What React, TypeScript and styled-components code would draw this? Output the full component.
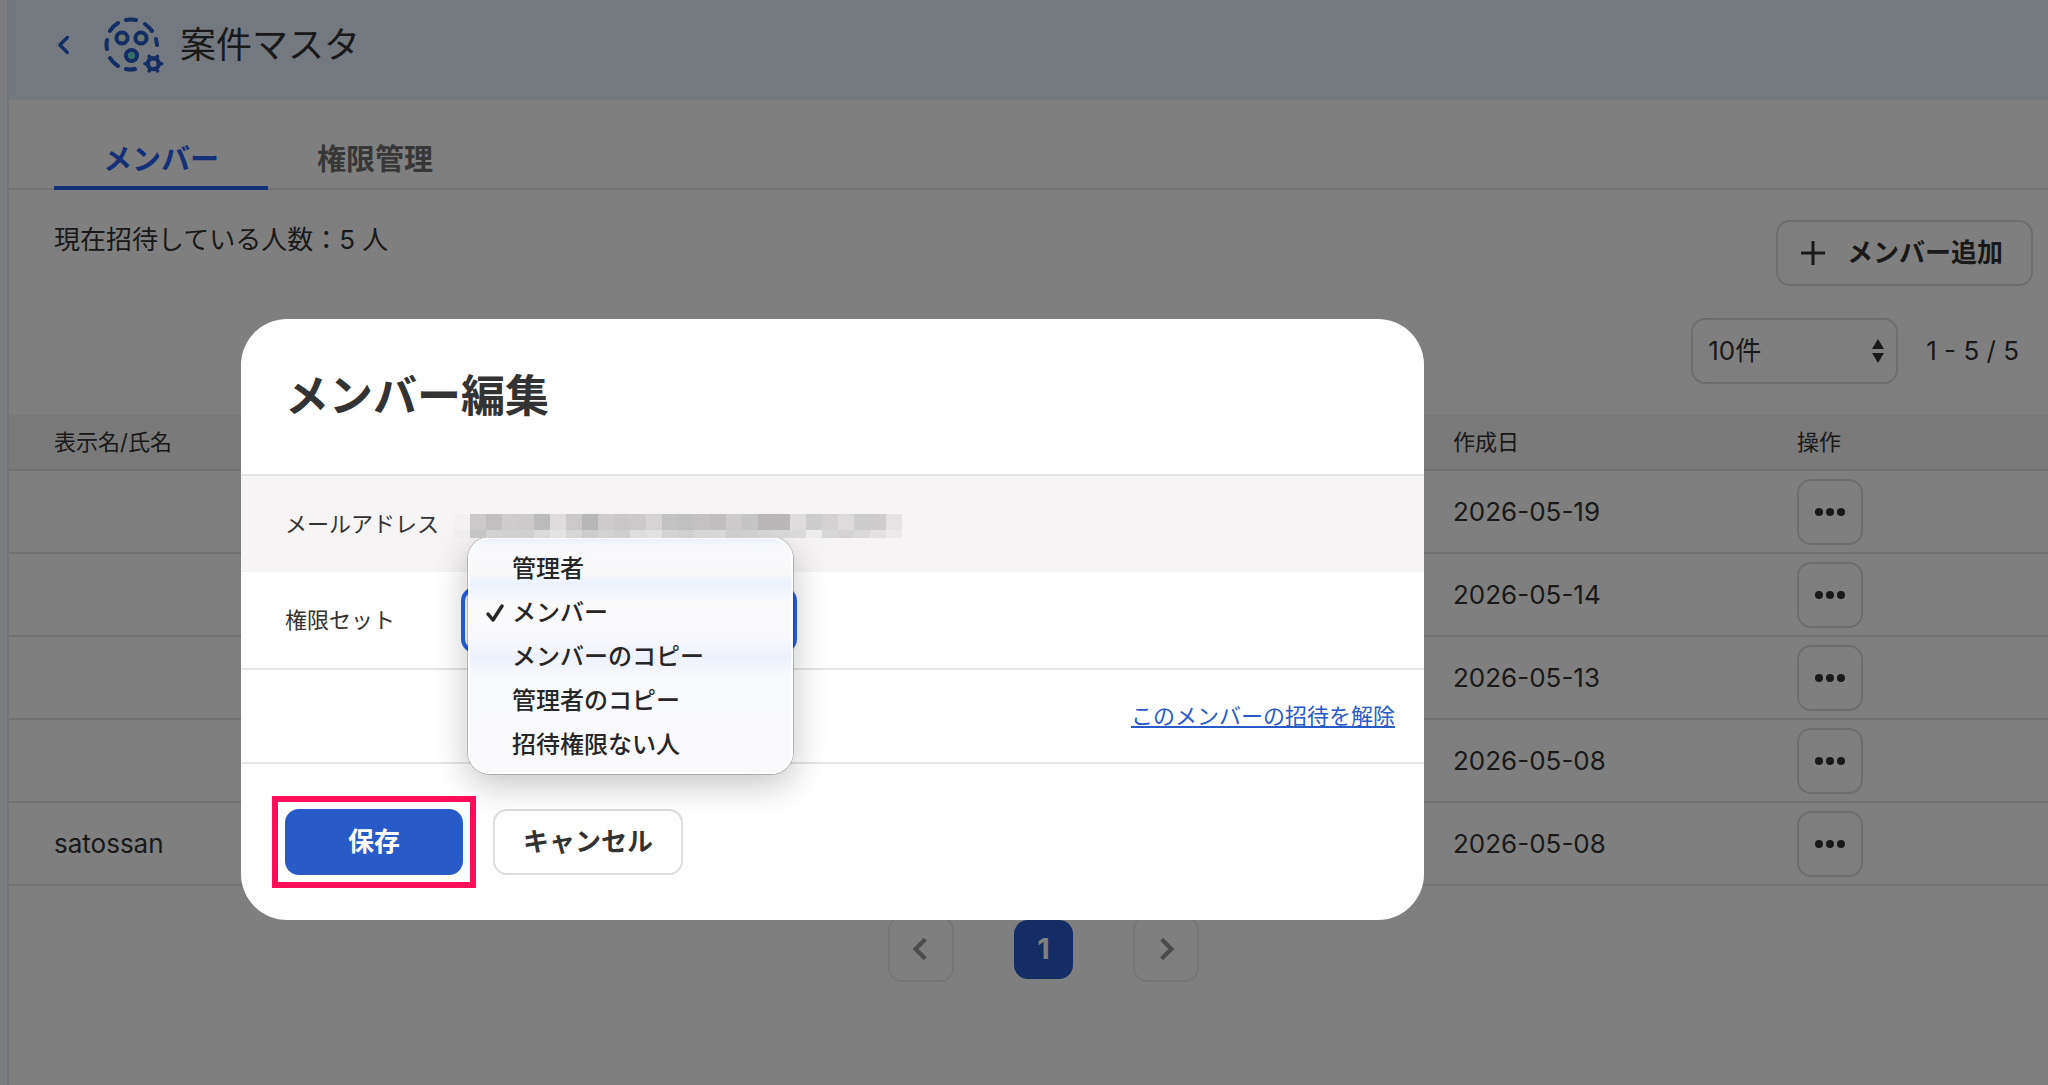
import React from "react";
import styled, { createGlobalStyle, css } from "styled-components";

const GlobalStyle = createGlobalStyle`
  *, *::before, *::after { box-sizing: border-box; }
  body {
    margin: 0;
    background: #fff;
    color: #333;
    font-family: Inter, "Noto Sans CJK JP", sans-serif;
    font-size: 26px;
    line-height: 40px;
  }
  button, select, input { font: inherit; color: inherit; margin: 0; }
`;

const Shell = styled.div`
  position: relative;
  display: flex;
  min-height: 100vh;
  overflow: hidden;
`;

const SideRail = styled.div`
  flex: none;
  width: 9px;
  background: #f6f8ff;
  border-right: 2px solid #e2edfb;
`;

const Page = styled.main`
  flex: 1;
  min-width: 0;
`;

const Header = styled.header`
  display: flex;
  align-items: center;
  height: 100px;
  padding: 0 45px 10px;
  background: #e9f1ff;
`;

const BackLink = styled.a`
  display: flex;
  width: 20px;
  margin-right: 30px;
  color: #285ac8;
`;

const PageTitle = styled.h1`
  margin: 0 0 0 16px;
  font-size: 36px;
  font-weight: 400;
  line-height: 52px;
`;

const Tabs = styled.nav`
  display: flex;
  align-items: flex-end;
  height: 90px;
  padding: 0 45px;
  border-bottom: 2px solid #e5e5e5;
`;

const Tab = styled.a<{ $active?: boolean }>`
  height: 60px;
  margin-bottom: -2px;
  padding: 0 49px;
  border-bottom: 4px solid transparent;
  color: #6e6e6e;
  font-size: 29px;
  font-weight: 700;
  line-height: 60px;
  text-decoration: none;
  ${(p) => p.$active && css`
    color: #2b60f0;
    border-color: #2b60f0;
  `}
`;

const Toolbar = styled.div`
  display: flex;
  justify-content: space-between;
  padding: 30px 15px 0 45px;
`;

const InviteCount = styled.p`
  margin: 0;
`;

const Button = styled.button<{ $primary?: boolean }>`
  display: inline-flex;
  align-items: center;
  justify-content: center;
  gap: 22px;
  height: 66px;
  padding: 0 28px;
  border: 2px solid #ddd;
  border-radius: 14px;
  background: #fff;
  font-weight: 700;
  ${(p) => p.$primary && css`
    width: 178px;
    border-color: #285ac8;
    background: #285ac8;
    color: #fff;
  `}
`;

const AddButton = styled(Button)`
  padding-left: 23px;
`;

const SquareButton = styled(Button)`
  width: 66px;
  padding: 0;
  vertical-align: top;
  &:disabled { border-color: #ececec; color: #999; }
`;

const Paging = styled.div`
  display: flex;
  align-items: center;
  justify-content: flex-end;
  gap: 28px;
  padding: 32px 29px 30px 45px;
`;

const SelectBox = styled.div`
  display: flex;
  align-items: center;
  width: 207px;
  height: 66px;
  padding-right: 12px;
  border: 2px solid #ddd;
  border-radius: 14px;
`;

const PageSize = styled.select`
  flex: 1;
  height: 60px;
  padding: 0 15px;
  border: 0;
  background: transparent;
  appearance: none;
`;

const Table = styled.table`
  width: 100%;
  border-collapse: collapse;
  table-layout: fixed;
`;

const HeadCell = styled.th<{ $width?: number }>`
  width: ${(p) => (p.$width ? `${p.$width}px` : "auto")};
  height: 56px;
  padding: 0 0 0 45px;
  background: #f4f4f4;
  border-bottom: 2px solid #e5e5e5;
  font-size: 22px;
  font-weight: 400;
  line-height: 32px;
  text-align: left;
`;

const Cell = styled.td`
  height: 83px;
  padding: 0 0 0 45px;
  border-bottom: 2px solid #e5e5e5;
`;

const Pager = styled.nav`
  display: flex;
  align-items: center;
  justify-content: center;
  gap: 60px;
  padding: 30px 15px 30px 45px;
`;

const CurrentPage = styled.button`
  width: 59px;
  height: 59px;
  padding: 0;
  border: 0;
  border-radius: 14px;
  background: #285ac8;
  color: #fff;
  font-size: 29px;
  font-weight: 700;
`;

const Backdrop = styled.div`
  position: absolute;
  inset: 0;
  padding: 319px 241px 0;
  background: rgba(0, 0, 0, 0.5);
`;

const Dialog = styled.section`
  max-width: 1183px;
  border-radius: 46px;
  background: #fff;
`;

const DialogHead = styled.div`
  padding: 45px 44px 46px;
  border-bottom: 2px solid #e5e5e5;
`;

const DialogTitle = styled.h2`
  margin: 0;
  font-size: 44px;
  font-weight: 700;
  line-height: 64px;
`;

const FieldRow = styled.div`
  display: flex;
  align-items: center;
  height: 98px;
  padding: 0 29px 0 44px;
  border-bottom: 2px solid #e5e5e5;
  font-size: 22px;
  line-height: 32px;
`;

const MailRow = styled(FieldRow)`
  height: 96px;
  border-bottom: 0;
  background: #f6f4f5;
`;

const LinkRow = styled(FieldRow)`
  height: 94px;
`;

const FieldLabel = styled.label`
  width: 176px;
`;

const ReleaseLink = styled.a`
  margin-left: auto;
  color: #285ac8;
`;

const Mosaic = styled.div`
  position: relative;
  z-index: 2;
  display: grid;
  grid-template-columns: repeat(28, 16px);
  grid-template-rows: 16px 8px;
  margin: 4px 0 0 -7px;
`;

const Tile = styled.span<{ $tone: string }>`
  background: #${(p) => p.$tone};
`;

const RoleField = styled.div`
  position: relative;
`;

const RoleSelect = styled.select`
  display: block;
  width: 336px;
  height: 66px;
  padding: 0 20px;
  border: 4px solid #2a62e6;
  border-radius: 14px;
  background: #fff;
  appearance: none;
  color: transparent;
  outline: 0;
`;

const Menu = styled.ul`
  position: absolute;
  z-index: 1;
  top: -50px;
  left: 7px;
  width: 325px;
  margin: 0;
  padding: 10px 0 7px;
  list-style: none;
  border-radius: 22px;
  background: linear-gradient(#eaf0ff 0, #f8f9fb 10px, #f8f8f9 36px, #ebf1fe 47px, #fafafb 66px, #f9f9fb 100px, #edf1fd 120px, #f8f9fc 140px, #f9f9fb);
  box-shadow: 0 0 0 1px rgba(0, 0, 0, 0.2), 0 10px 36px rgba(0, 0, 0, 0.24), inset 0 0 0 2px rgba(255, 255, 255, 0.7);
  color: #262626;
`;

const MenuItem = styled.li`
  display: flex;
  align-items: center;
  height: 44px;
  padding-left: 17px;
  font-size: 24px;
  font-weight: 500;
  line-height: 36px;
`;

const CheckSlot = styled.span`
  display: flex;
  width: 27px;
`;

const DialogFoot = styled.div`
  display: flex;
  gap: 30px;
  padding: 45px 44px;
`;

const Highlight = styled.div`
  display: flex;
  outline: 6px solid #ff0f5b;
  outline-offset: 7px;
`;

const rows = [
  { name: "", date: "2026-05-19" },
  { name: "", date: "2026-05-14" },
  { name: "", date: "2026-05-13" },
  { name: "", date: "2026-05-08" },
  { name: "satossan", date: "2026-05-08" },
];

const roles = ["管理者", "メンバー", "メンバーのコピー", "管理者のコピー", "招待権限ない人"];

const tones = (
  "f3f1f2 cbc9ca c1bfc0 cecccd cccacb bcbcbc dedcdd cac8c9 b7b7b7 cdcbcc c9c7c8 cbc9ca d5d3d4 c2c2c2 " +
  "c0c0c0 c3c1c2 c0bebf cccacb c5c5c5 b9b7b8 b9b7b8 dedcdd cdcdcd d3d1d2 dcdadb cdcdcd cecccd e5e3e4 " +
  "efeded c6c6c6 d2d2d2 d0d0d0 d0d0d0 dadada e4e4e4 d6d6d6 cdcdcd d3d3d3 cfcfcf dedede e2e2e2 d4d4d4 " +
  "d0d0d0 d6d6d6 d8d8d8 cecece d0d0d0 d4d4d4 d6d6d6 dadada eeecec d6d6d6 d4d2d3 dad8d9 e3e1e2 ebe9ea"
).split(" ");

const gearTeeth = [0, 60, 120, 180, 240, 300];

const ProjectIcon = () => (
  <svg width="60" height="56" viewBox="0 0 60 56" fill="none" stroke="#285ac8" strokeWidth="4" strokeLinecap="round" aria-hidden="true">
    <path d="M22 3Q27 2 32 3M41 7Q45 10 48 14M52 22L53 28M14 49Q9 46 6 41M3 32Q2 27 3 23M6 14Q9 9 14 6M22 52Q27 53 31 52" />
    <circle cx="18" cy="21" r="5.600" fill="#dfeee6" />
    <circle cx="37" cy="21" r="5.600" fill="#dfeee6" />
    <circle cx="27.500" cy="38.500" r="5.600" fill="#6ce0d0" />
    <circle cx="49.300" cy="46.700" r="5.400" strokeWidth="4.400" />
    {gearTeeth.map((a) => (
      <path key={a} d="M55 46.700h2.600" strokeWidth="3.600" transform={`rotate(${a} 49.300 46.700)`} />
    ))}
  </svg>
);

const Chevron = ({ size, right, round }: { size: number; right?: boolean; round?: boolean }) => (
  <svg width={size} height={size} viewBox="0 0 24 24" fill="none" stroke="currentColor" strokeWidth={4} strokeLinecap={round ? "round" : "butt"} strokeLinejoin={round ? "round" : "miter"} aria-hidden="true">
    <path d={right ? "M8 3l9 9-9 9" : "M16 3l-9 9 9 9"} />
  </svg>
);

export default function App() {
  return (
    <>
      <GlobalStyle />
      <Shell>
        <SideRail />
        <Page>
          <Header>
            <BackLink href="#back" aria-label="戻る"><Chevron size={20} round /></BackLink>
            <ProjectIcon />
            <PageTitle>案件マスタ</PageTitle>
          </Header>
          <Tabs>
            <Tab href="#members" $active>メンバー</Tab>
            <Tab href="#roles">権限管理</Tab>
          </Tabs>
          <Toolbar>
            <InviteCount>現在招待している人数：5 人</InviteCount>
            <AddButton type="button">
              <svg width="24" height="24" viewBox="0 0 24 24" stroke="currentColor" strokeWidth="3" aria-hidden="true"><path d="M12 0v24M0 12h24" /></svg>
              メンバー追加
            </AddButton>
          </Toolbar>
          <Paging>
            <SelectBox>
              <PageSize aria-label="表示件数" defaultValue="10"><option value="10">10件</option></PageSize>
              <svg width="12" height="24" viewBox="0 0 12 24" fill="currentColor" aria-hidden="true"><path d="M6 0l6 10H0zM6 24l6-10H0z" /></svg>
            </SelectBox>
            <span>1 - 5 / 5</span>
          </Paging>
          <Table>
            <thead>
              <tr>
                <HeadCell>表示名/氏名</HeadCell>
                <HeadCell $width={344}>作成日</HeadCell>
                <HeadCell $width={296}>操作</HeadCell>
              </tr>
            </thead>
            <tbody>
              {rows.map((r, i) => (
                <tr key={i}>
                  <Cell>{r.name}</Cell>
                  <Cell>{r.date}</Cell>
                  <Cell>
                    <SquareButton type="button" aria-label="操作メニュー">
                      <svg width="30" height="10" viewBox="0 0 30 10" fill="currentColor" aria-hidden="true"><circle cx="4" cy="5" r="4" /><circle cx="15" cy="5" r="4" /><circle cx="26" cy="5" r="4" /></svg>
                    </SquareButton>
                  </Cell>
                </tr>
              ))}
            </tbody>
          </Table>
          <Pager aria-label="ページ">
            <SquareButton type="button" disabled aria-label="前へ"><Chevron size={26} /></SquareButton>
            <CurrentPage type="button">1</CurrentPage>
            <SquareButton type="button" disabled aria-label="次へ"><Chevron size={26} right /></SquareButton>
          </Pager>
        </Page>

        <Backdrop>
          <Dialog role="dialog" aria-labelledby="dialog-title">
            <DialogHead><DialogTitle id="dialog-title">メンバー編集</DialogTitle></DialogHead>
            <MailRow>
              <FieldLabel as="span">メールアドレス</FieldLabel>
              <Mosaic>{tones.map((t, i) => <Tile key={i} $tone={t} />)}</Mosaic>
            </MailRow>
            <FieldRow>
              <FieldLabel htmlFor="role">権限セット</FieldLabel>
              <RoleField>
                <RoleSelect id="role" defaultValue="メンバー">
                  {roles.map((r) => <option key={r}>{r}</option>)}
                </RoleSelect>
                <Menu>
                  {roles.map((r, i) => (
                    <MenuItem key={r}>
                      <CheckSlot>
                        {i === 1 && (
                          <svg width="20" height="20" viewBox="0 0 20 20" fill="none" stroke="currentColor" strokeWidth="3.500" strokeLinecap="round" strokeLinejoin="round" aria-hidden="true"><path d="M3 11l5 6L17 3" /></svg>
                        )}
                      </CheckSlot>
                      {r}
                    </MenuItem>
                  ))}
                </Menu>
              </RoleField>
            </FieldRow>
            <LinkRow><ReleaseLink href="#release">このメンバーの招待を解除</ReleaseLink></LinkRow>
            <DialogFoot>
              <Highlight><Button type="button" $primary>保存</Button></Highlight>
              <Button type="button">キャンセル</Button>
            </DialogFoot>
          </Dialog>
        </Backdrop>
      </Shell>
    </>
  );
}
